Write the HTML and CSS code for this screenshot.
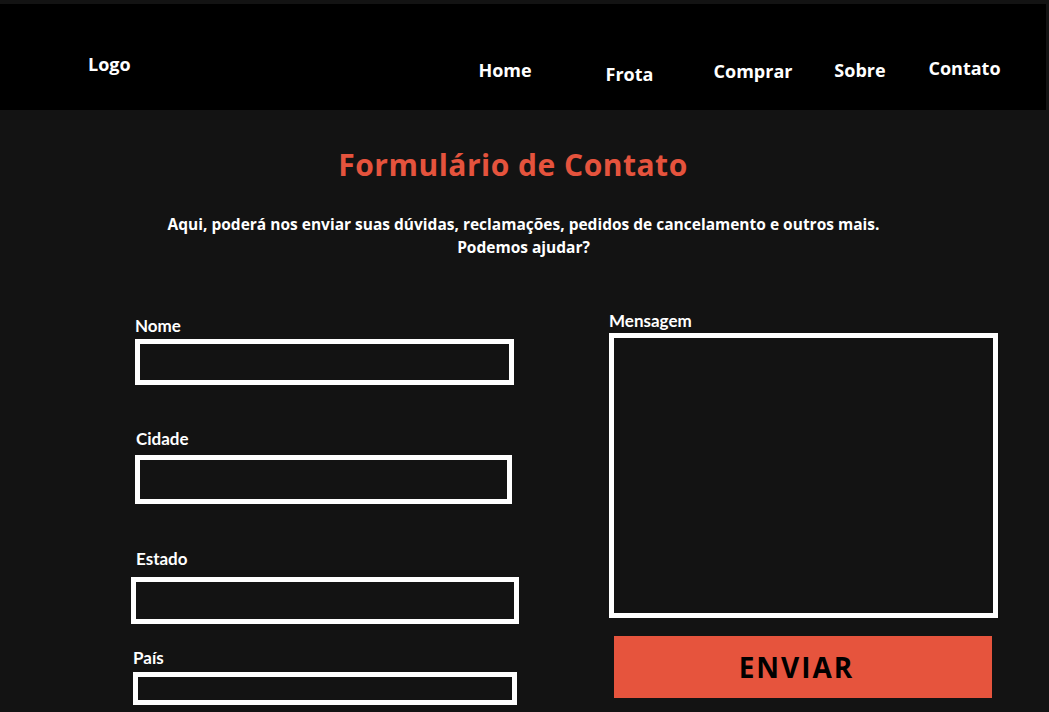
FILE: index.html
```html
<!DOCTYPE html>
<html lang="pt-BR">
<head>
<meta charset="utf-8">
<title>Formulário de Contato</title>
<link rel="stylesheet" href="styles.css">
</head>
<body>
<header class="topbar">
  <div class="logo">Logo</div>
  <nav class="nav">
    <a class="nav-item nav-home" href="#">Home</a>
    <a class="nav-item nav-frota" href="#">Frota</a>
    <a class="nav-item nav-comprar" href="#">Comprar</a>
    <a class="nav-item nav-sobre" href="#">Sobre</a>
    <a class="nav-item nav-contato" href="#">Contato</a>
  </nav>
</header>
<main class="content">
  <h1 class="title">Formulário de Contato</h1>
  <p class="intro">Aqui, poderá nos enviar suas dúvidas, reclamações, pedidos de cancelamento e outros mais.<br>Podemos ajudar?</p>
  <form class="form">
    <div class="col-left">
      <label class="label label-nome" for="nome">Nome</label>
      <input class="field field-nome" id="nome" type="text">
      <label class="label label-cidade" for="cidade">Cidade</label>
      <input class="field field-cidade" id="cidade" type="text">
      <label class="label label-estado" for="estado">Estado</label>
      <input class="field field-estado" id="estado" type="text">
      <label class="label label-pais" for="pais">País</label>
      <input class="field field-pais" id="pais" type="text">
    </div>
    <div class="col-right">
      <label class="label label-msg" for="msg">Mensagem</label>
      <textarea class="field field-msg" id="msg"></textarea>
      <button class="send" type="button">ENVIAR</button>
    </div>
  </form>
</main>
</body>
</html>
```
FILE: styles.css
```css
* { box-sizing: border-box; }
html, body { margin: 0; padding: 0; }
body {
  background: #131313;
  color: #fff;
  font-family: Lato, "Open Sans", sans-serif;
  font-weight: 700;
  width: 1049px;
  height: 712px;
  overflow: hidden;
}
.topbar {
  margin: 4px 3px 0 0;
  height: 106px;
  background: #000;
  display: flex;
  align-items: flex-start;
  padding-left: 88px;
  font-family: "Open Sans", Lato, sans-serif;
}
.logo {
  font-size: 18px;
  line-height: 22px;
  margin-top: 49px;
}
.nav {
  margin-left: auto;
  margin-right: 25px;
  display: grid;
  grid-template-columns: 120px 129px 118px 96px 113px;
  align-items: start;
}
.nav-item {
  color: #fff;
  text-decoration: none;
  font-size: 18px;
  line-height: 22px;
  text-align: center;
}
.nav-home { margin-top: 55px; }
.nav-frota { margin-top: 59px; }
.nav-comprar { margin-top: 56px; }
.nav-sobre { margin-top: 55px; }
.nav-contato { margin-top: 53px; }

.content { display: flex; flex-direction: column; }
.title {
  margin: 37px 0 0;
  text-align: center;
  font-family: "Open Sans", Lato, sans-serif;
  font-size: 30px;
  line-height: 36px;
  letter-spacing: 0.5px;
  color: #e5533d;
  padding-right: 23px;
}
.intro {
  margin: 30px 0 0;
  text-align: center;
  font-family: "Open Sans", Lato, sans-serif;
  font-size: 15.5px;
  line-height: 23px;
  padding-right: 2px;
}
.form {
  display: flex;
  margin-top: 51px;
  padding-left: 131px;
}
.col-left {
  display: flex;
  flex-direction: column;
  width: 478px;
}
.col-right {
  display: flex;
  flex-direction: column;
  width: 400px;
}
.label {
  display: block;
  font-size: 17px;
  line-height: 20px;
}
.field {
  display: block;
  border: 5px solid #fff;
  border-radius: 0;
  background: transparent;
  color: #fff;
  font: inherit;
  outline: none;
  padding: 0 8px;
}
.label-nome { margin: 6px 0 0 4px; }
.field-nome { margin: 3px 0 0 4px; width: 379px; height: 46px; }
.label-cidade { margin: 44px 0 0 5px; }
.field-cidade { margin: 6px 0 0 4px; width: 377px; height: 49px; }
.label-estado { margin: 45px 0 0 5px; }
.field-estado { margin: 8px 0 0 0; width: 388px; height: 47px; }
.label-pais { margin: 24px 0 0 2px; }
.field-pais { margin: 4px 0 0 2px; width: 384px; height: 33px; }

.label-msg { margin: 1px 0 0 0; }
.field-msg { margin: 2px 0 0 0; width: 389px; height: 285px; resize: none; }
.send {
  margin: 18px 0 0 5px;
  width: 378px;
  height: 62px;
  border: 0;
  border-radius: 0;
  background: #e6543d;
  color: #000;
  font-family: "Open Sans", Lato, sans-serif;
  font-weight: 700;
  font-size: 28px;
  letter-spacing: 2px;
  padding: 0 13px 0 0;
  line-height: 62px;
}
```
